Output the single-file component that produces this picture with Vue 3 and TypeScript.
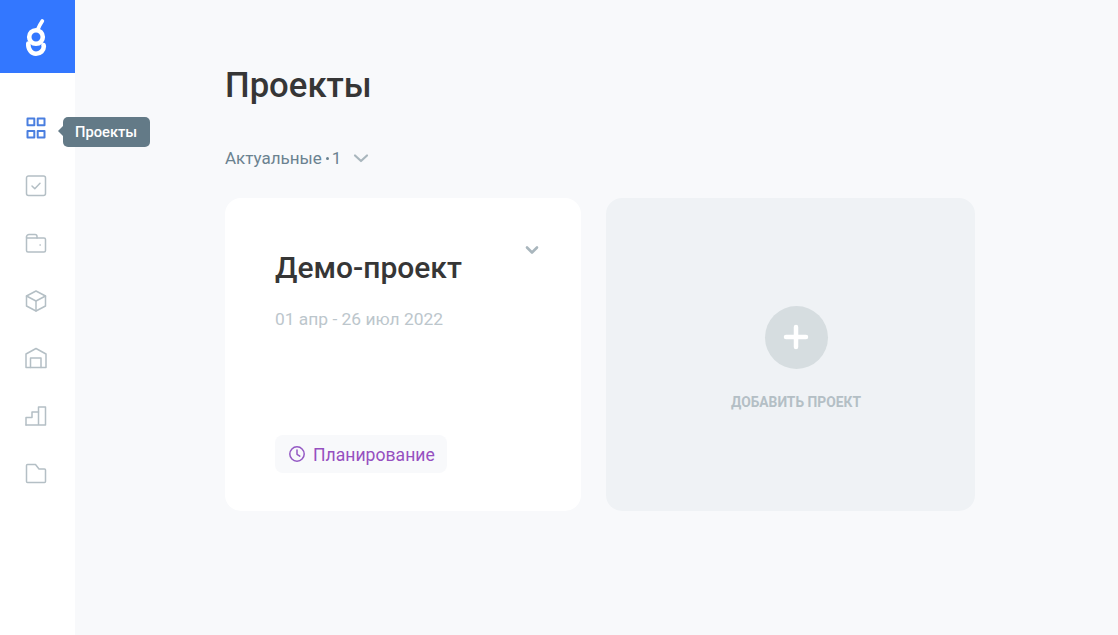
<template>
  <div class="page">
    <aside class="sidebar">
      <div class="logo">
        <svg width="24" height="42" viewBox="0 0 24 42" fill="none" stroke="#fff" stroke-width="4.6" stroke-linecap="round">
          <circle cx="12" cy="21" r="6.800" />
          <path d="M14 13 C15 10.500 16.300 8 18.300 5" stroke-width="3.800" />
          <path d="M4.300 27.500 C4 33.500 7.500 37.700 12 37.700 C16.500 37.700 19.800 34.300 19.800 30.500 L19.500 29" />
        </svg>
      </div>
      <nav class="nav">
        <a v-for="item in navItems" :key="item.name" class="nav-item" :class="{ active: item.active }">
          <svg width="24" height="24" viewBox="0 0 24 24" fill="none" stroke="currentColor" stroke-width="1.5" stroke-linejoin="round" stroke-linecap="round">
            <path v-for="d in item.paths" :key="d" :d="d" />
          </svg>
          <span v-if="item.active" class="tooltip">{{ item.name }}</span>
        </a>
      </nav>
    </aside>

    <main class="content">
      <h1 class="title">Проекты</h1>
      <div class="filter">
        <span>Актуальные</span>
        <span class="dot"></span>
        <span>1</span>
        <svg class="filter-arrow" width="16" height="10" viewBox="0 0 16 10" fill="none" stroke="#a9b6bd" stroke-width="2.200" stroke-linecap="round" stroke-linejoin="round">
          <path d="M2 2.500 L8 8 L14 2.500" />
        </svg>
      </div>

      <div class="cards">
        <section class="card">
          <div class="card-head">
            <h2 class="card-title">Демо-проект</h2>
            <svg class="card-arrow" width="16" height="10" viewBox="0 0 16 10" fill="none" stroke="#a9b6bd" stroke-width="2.600" stroke-linecap="round" stroke-linejoin="round">
              <path d="M3 2.500 L8 7.500 L13 2.500" />
            </svg>
          </div>
          <div class="card-date">01 апр - 26 июл 2022</div>
          <div class="status">
            <svg width="18" height="18" viewBox="0 0 18 18" fill="none" stroke="#9459c4" stroke-width="1.500" stroke-linecap="round" stroke-linejoin="round">
              <circle cx="9" cy="9" r="7.200" />
              <path d="M9 5 V9.300 L11.800 11.200" />
            </svg>
            <span class="status-text">Планирование</span>
          </div>
        </section>

        <section class="add-card">
          <div class="add-circle">
            <svg class="add-plus" width="26" height="26" viewBox="0 0 26 26" fill="none" stroke="#fff" stroke-width="4.500" stroke-linecap="round">
              <path d="M13 3 V23 M3 13 H23" />
            </svg>
          </div>
          <div class="add-label">ДОБАВИТЬ ПРОЕКТ</div>
        </section>
      </div>
    </main>
  </div>
</template>

<script setup lang="ts">
interface NavItem {
  name: string
  paths: string[]
  active?: boolean
}

const navItems: NavItem[] = [
  {
    name: 'Проекты',
    active: true,
    paths: [
      'M3.500 2.500 H10.300 V9.300 H3.500 Z',
      'M13.700 2.500 H20.500 V9.300 H13.700 Z',
      'M3.500 15 H10.300 V21.500 H3.500 Z',
      'M13.700 15 H20.500 V21.500 H13.700 Z',
    ],
  },
  {
    name: 'Задачи',
    paths: ['M4.500 2 H19.500 A2 2 0 0 1 21.500 4 V19.500 A2 2 0 0 1 19.500 21.500 H4.500 A2 2 0 0 1 2.500 19.500 V4 A2 2 0 0 1 4.500 2 Z', 'M8 12 L10.800 14.800 L16 9.200'],
  },
  {
    name: 'Бюджет',
    paths: [
      'M2.500 6 V19.500 A1.500 1.500 0 0 0 4 21 H20 A1.500 1.500 0 0 0 21.500 19.500 V8.500 A1.500 1.500 0 0 0 20 7 H2.500',
      'M2.500 6 A2.500 2.500 0 0 1 5 3.500 H11 A2 2 0 0 1 13 5.500 V7',
      'M16 14 H16.300',
    ],
  },
  {
    name: 'Материалы',
    paths: ['M12 2 L21.500 7 V17 L12 22 L2.500 17 V7 Z', 'M2.500 7 L12 12 L21.500 7', 'M12 12 V22'],
  },
  {
    name: 'Склад',
    paths: ['M2 8 L12 2.500 L22 8 V21.500 H2 Z', 'M6.500 21.500 V12 H17 V21.500'],
  },
  {
    name: 'Отчёты',
    paths: ['M2 21 H21.500 V3 H14.500 V21', 'M14.500 8 H8 V13.500 H2 V21'],
  },
  {
    name: 'Файлы',
    paths: ['M2.500 4.500 A1 1 0 0 1 3.500 3.500 H11.500 L15 8 H20.500 A1 1 0 0 1 21.500 9 V20.500 A1 1 0 0 1 20.500 21.500 H3.500 A1 1 0 0 1 2.500 20.500 Z'],
  },
]
</script>

<style>
html,
body {
  margin: 0;
  background: #f8f9fb;
}
</style>

<style scoped>
.page {
  display: flex;
  height: 635px;
  overflow: hidden;
  background: #f8f9fb;
  font-family: Roboto, "Liberation Sans", sans-serif;
}
.sidebar {
  flex: 0 0 75px;
  background: #fff;
}
.logo {
  height: 73px;
  padding-right: 3px;
  box-sizing: border-box;
  background: #3377ff;
  display: flex;
  align-items: center;
  justify-content: center;
}
.nav {
  display: flex;
  flex-direction: column;
  padding: 40px 4px 0 0;
  gap: 27.5px;
}
.nav-item {
  position: relative;
  height: 30px;
  display: flex;
  align-items: center;
  justify-content: center;
  color: #b4bfc5;
}
.nav-item.active {
  color: #4a7fe0;
}
.nav-item.active svg {
  stroke-width: 2;
}
.tooltip {
  position: absolute;
  left: 63px;
  top: 4px;
  height: 30px;
  padding: 0 13px 0 12px;
  display: flex;
  align-items: center;
  border-radius: 5px;
  background: #637a87;
  color: #fff;
  font-size: 14.7px;
  font-weight: 500;
  white-space: nowrap;
}
.tooltip::before {
  content: "";
  position: absolute;
  left: -5px;
  top: 9px;
  border-top: 5px solid transparent;
  border-bottom: 5px solid transparent;
  border-right: 5px solid #637a87;
}
.content {
  flex: 1;
  padding: 64px 0 0 150px;
}
.title {
  margin: 0;
  font-size: 34.7px;
  line-height: 42px;
  font-weight: 500;
  color: #363636;
}
.filter {
  margin-top: 40px;
  height: 24px;
  display: flex;
  align-items: center;
  font-size: 17px;
  color: #6b8290;
}
.dot {
  width: 3px;
  height: 3px;
  margin: 0 3px 0 4px;
  border-radius: 50%;
  background: #6b8290;
}
.filter-arrow {
  margin-left: 12px;
}
.cards {
  margin-top: 28px;
  display: flex;
  gap: 25px;
}
.card {
  width: 356px;
  height: 313px;
  box-sizing: border-box;
  padding: 50px;
  background: #fff;
  border-radius: 16px;
  display: flex;
  flex-direction: column;
}
.card-head {
  position: relative;
}
.card-title {
  margin: 0;
  font-size: 30px;
  line-height: 40px;
  font-weight: 500;
  color: #363636;
}
.card-arrow {
  position: absolute;
  right: -9px;
  top: -3px;
}
.card-date {
  margin-top: 20px;
  font-size: 17.4px;
  line-height: 22px;
  color: #bcc6cc;
}
.status {
  margin-top: auto;
  margin-bottom: -12px;
  align-self: flex-start;
  height: 38px;
  padding: 0 12px 0 13px;
  display: flex;
  align-items: center;
  gap: 7px;
  border-radius: 8px;
  background: #f8f9fb;
  color: #9650c0;
  font-size: 17.6px;
}
.status-text {
  padding-top: 2px;
}
.add-card {
  width: 369px;
  height: 313px;
  background: #eff2f5;
  border-radius: 16px;
  display: flex;
  flex-direction: column;
  align-items: center;
  padding: 108px 0 0 11px;
  box-sizing: border-box;
}
.add-circle {
  width: 63px;
  height: 63px;
  border-radius: 50%;
  background: #d6dde0;
  display: flex;
  align-items: center;
  justify-content: center;
}
.add-plus {
  margin-top: -2px;
}
.add-label {
  margin-top: 24px;
  font-size: 13.8px;
  line-height: 18px;
  font-weight: 700;
  color: #b4bfc5;
}
</style>
